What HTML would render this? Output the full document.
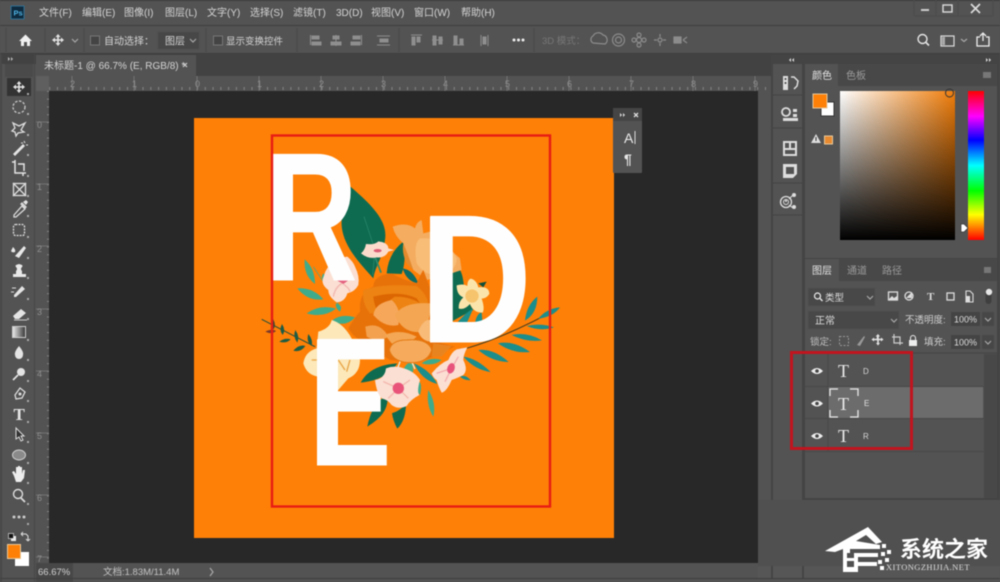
<!DOCTYPE html>
<html><head><meta charset="utf-8">
<style>
html,body{margin:0;padding:0;background:#535353;width:1000px;height:582px;overflow:hidden}
svg{display:block;position:absolute;left:0;top:0;filter:blur(.5px)}
text{font-family:"Liberation Sans","Noto Sans CJK SC",sans-serif;fill:#d4d4d4;font-size:10px}
.r{fill:#8f8f8f;font-size:9px}
.i{fill:none;stroke:#dcdcdc;stroke-width:1.3}
.g{fill:none;stroke:#a8a8a8;stroke-width:1.2}
.w{fill:#e4e4e4}
</style></head><body>
<svg width="1000" height="582" viewBox="0 0 1000 582" xmlns="http://www.w3.org/2000/svg">
<defs>
<linearGradient id="h" x1="0" x2="1" y1="0" y2="0"><stop offset="0" stop-color="#fff"/><stop offset="1" stop-color="#f07d0a"/></linearGradient>
<linearGradient id="v" x1="0" x2="0" y1="0" y2="1"><stop offset="0" stop-color="#000" stop-opacity="0"/><stop offset="1" stop-color="#000"/></linearGradient>
<linearGradient id="hue" x1="0" x2="0" y1="0" y2="1"><stop offset="0" stop-color="#f00"/><stop offset=".17" stop-color="#f0f"/><stop offset=".33" stop-color="#00f"/><stop offset=".5" stop-color="#0ff"/><stop offset=".67" stop-color="#0f0"/><stop offset=".83" stop-color="#ff0"/><stop offset="1" stop-color="#f00"/></linearGradient>
<linearGradient id="gr" x1="0" x2="1" y1="0" y2="0"><stop offset="0" stop-color="#eee"/><stop offset="1" stop-color="#333"/></linearGradient>
<pattern id="tx" width="7.78" height="14" patternUnits="userSpaceOnUse" x="197" y="76"><rect x="0" y="11" width="1" height="3" fill="#858585"/></pattern>
<pattern id="ty" width="14" height="7.78" patternUnits="userSpaceOnUse" x="36" y="122"><rect x="11" y="0" width="3" height="1" fill="#858585"/></pattern>
</defs>

<rect width="1000" height="582" fill="#535353"/>
<!-- title bar & options -->
<rect x="0" y="0" width="1000" height="1" fill="#3a3a3a"/>
<rect x="0" y="25" width="1000" height="1" fill="#3f3f3f"/>
<rect x="0" y="53" width="1000" height="1" fill="#3e3e3e"/>
<rect x="0" y="54" width="1000" height="10" fill="#424242"/>
<rect x="36" y="54" width="735" height="22" fill="#424242"/>
<rect x="36" y="55" width="160" height="21" fill="#535353"/>
<rect x="11" y="6" width="13" height="13" fill="#0e2a3e" stroke="#2f6f93"/>
<text x="13.500" y="15.500" style="font-size:7.500px;font-weight:bold;fill:#4fb3e4">Ps</text>
<text x="39" y="16">文件(F)</text><text x="82" y="16">编辑(E)</text><text x="124" y="16">图像(I)</text><text x="165" y="16">图层(L)</text><text x="207" y="16">文字(Y)</text><text x="250" y="16">选择(S)</text><text x="293" y="16">滤镜(T)</text><text x="336" y="16">3D(D)</text><text x="371" y="16">视图(V)</text><text x="414" y="16">窗口(W)</text><text x="461" y="16">帮助(H)</text>
<!-- window controls -->
<rect x="921" y="9" width="8" height="2" fill="#ccc"/>
<rect x="943" y="5" width="9" height="7" fill="none" stroke="#ddd" stroke-width="1.400"/>
<path d="M971 4l9 9M980 4l-9 9" stroke="#ddd" stroke-width="1.700"/>
<path d="M914 0v16M936 0v16M958 0v16M993 0v16M914 16h79" stroke="#4b4b4b"/>
<!-- options bar -->
<path d="M6 28v24M45 28v24M84 28v24M206 28v24M297 28v24M399 28v24M534 28v24" stroke="#474747"/>
<path d="M19 41l6.500-6.500 6.500 6.500h-2v5h-3v-4h-3v4h-3v-5z" fill="#f0f0f0"/>
<g class="w"><path d="M58 34l2.500 3h-1.700v2.200H61V37.500l3 2.500-3 2.500v-1.700h-2.200V43H60.500L58 46l-2.500-3h1.700v-2.200H55v1.700l-3-2.500 3-2.500v1.700h2.200V37h-1.700z"/></g>
<path d="M72 39l3 3 3-3" class="g" stroke-width="1"/>
<rect x="90.500" y="36" width="9" height="9" fill="#444" stroke="#777"/>
<text x="104" y="44.500">自动选择：</text>
<rect x="158" y="32" width="41" height="17" fill="#474747" stroke="#4c4c4c"/>
<text x="165" y="44.500">图层</text>
<path d="M190 39l3 3 3-3" class="g" stroke-width="1"/>
<rect x="213.500" y="36" width="9" height="9" fill="#444" stroke="#777"/>
<text x="226" y="44.500" style="font-size:9.500px">显示变换控件</text>
<g stroke="#8f8f8f" fill="#8f8f8f" stroke-width="1">
<path d="M310.500 35v10" fill="none"/><rect x="312" y="36" width="7" height="3"/><rect x="312" y="42" width="9" height="3"/>
<path d="M336 35v11" fill="none"/><rect x="333" y="36" width="6" height="3"/><rect x="331" y="42" width="10" height="3"/>
<path d="M361.500 35v10" fill="none"/><rect x="353" y="36" width="7" height="3"/><rect x="351" y="42" width="9" height="3"/>
<path d="M377 36h13M377 45h13" fill="none"/><rect x="380" y="39" width="8" height="3"/>
<path d="M411 35h11" fill="none"/><rect x="412" y="37" width="3" height="8"/><rect x="417" y="37" width="3" height="5"/>
<path d="M432 40h11" fill="none"/><rect x="433" y="36" width="3" height="9"/><rect x="439" y="37" width="3" height="7"/>
<path d="M453 45h11" fill="none"/><rect x="454" y="36" width="3" height="8"/><rect x="460" y="39" width="3" height="5"/>
<path d="M481 35v11M488 35v11" fill="none"/><rect x="483" y="37" width="3" height="7"/>
</g>
<g fill="#eee"><circle cx="514" cy="40" r="1.500"/><circle cx="518.500" cy="40" r="1.500"/><circle cx="523" cy="40" r="1.500"/></g>
<text x="542" y="44" style="font-size:9.500px;fill:#777">3D 模式：</text>
<g class="g" style="stroke:#8c8c8c">
<path d="M593 43a4 4 0 0 1 0-7 6 6 0 0 1 10-1 5 5 0 0 1 2 9z"/>
<circle cx="618.500" cy="40" r="6"/><circle cx="618.500" cy="40" r="3"/>
<circle cx="639" cy="40" r="2.500"/><circle cx="639" cy="35" r="2"/><circle cx="639" cy="45" r="2"/><circle cx="634" cy="40" r="2"/><circle cx="644" cy="40" r="2"/>
<circle cx="660" cy="40" r="2"/><path d="M660 34v3M660 43v3M654 40h3M663 40h3"/>
<rect x="674" y="37" width="7" height="6" fill="#8c8c8c"/><path d="M683 40l4-3M683 40l4 3"/>
</g>
<circle cx="922.500" cy="39" r="4.500" fill="none" stroke="#e6e6e6" stroke-width="1.400"/><path d="M926 42.500l3 3" stroke="#e6e6e6" stroke-width="1.600"/>
<rect x="941" y="36" width="13" height="10" fill="none" stroke="#ddd" stroke-width="1.200"/><rect x="942" y="37" width="3" height="8" fill="#aaa"/>
<path d="M961 39l3 2.500 3-2.500" class="g"/>
<path d="M980 37h-3v9h12v-9h-3M983 41v-7M980 36l3-3 3 3" fill="none" stroke="#eee" stroke-width="1.300"/>

<!-- tab -->
<text x="44" y="69" style="font-size:10px;fill:#d4d4d4">未标题-1 @ 66.7% (E, RGB/8) *</text>
<path d="M183 63l4 4M187 63l-4 4" stroke="#ccc" stroke-width="1.200"/>
<path d="M8 57l2 2-2 2zM11 57l2 2-2 2z" fill="#bbb"/>

<!-- rulers & workspace -->
<rect x="36" y="76" width="733" height="15" fill="#535353"/>
<rect x="36" y="76" width="13" height="15" fill="#5f5f5f"/>
<rect x="49" y="76" width="720" height="15" fill="url(#tx)"/>
<rect x="36" y="91" width="13" height="472" fill="#535353"/>
<rect x="36" y="91" width="13" height="472" fill="url(#ty)"/>
<path d="M72 76v15M134 76v15M197 76v15M259 76v15M321 76v15M383 76v15M445 76v15M507 76v15M569 76v15M631 76v15M693 76v15M755 76v15" stroke="#7d7d7d" stroke-width=".8"/>
<path d="M36 122h13M36 184h13M36 246h13M36 309h13M36 371h13M36 433h13M36 495h13M36 557h13" stroke="#7d7d7d" stroke-width=".8"/>
<text class="r" x="70" y="87">2</text><text class="r" x="132" y="87">1</text><text class="r" x="195" y="87">0</text><text class="r" x="257" y="87">1</text><text class="r" x="319" y="87">2</text><text class="r" x="381" y="87">3</text><text class="r" x="443" y="87">4</text><text class="r" x="505" y="87">5</text><text class="r" x="567" y="87">6</text><text class="r" x="629" y="87">7</text><text class="r" x="691" y="87">8</text><text class="r" x="753" y="87">9</text>
<text class="r" x="37" y="128">0</text><text class="r" x="37" y="190">1</text><text class="r" x="37" y="252">2</text><text class="r" x="37" y="315">3</text><text class="r" x="37" y="377">4</text><text class="r" x="37" y="439">5</text><text class="r" x="37" y="501">6</text><text class="r" x="37" y="562">7</text>
<rect x="49" y="91" width="709" height="472" fill="#282828"/>

<!-- document -->
<rect x="194" y="118" width="420" height="420" fill="#fe8007"/>

<!-- artwork (coords = zoom crop) -->
<g transform="translate(260 200) scale(.3333)">
<path d="M262 -48C330 10 385 60 375 120 370 170 345 200 340 235 300 190 240 130 245 60 245 20 255 -20 262 -48z" fill="#0f6b50"/>
<path d="M312 50L345 150 338 225" stroke="#2a8a6c" stroke-width="2" fill="none"/>
<path d="M345 170l18 48" stroke="#2f8c6c" stroke-width="5"/>
<g fill="#3fab8b">
<path d="M134 178Q165 205 165 252Q130 225 134 178z"/>
<path d="M112 265Q160 262 190 298Q145 305 112 265z"/>
<path d="M140 340Q180 312 228 326Q190 355 140 340z"/>
<path d="M190 220Q205 235 195 245Q180 235 190 220z"/>
<path d="M228 310Q250 315 240 335Q225 325 228 310z"/>
<path d="M215 362Q245 340 285 352Q255 385 215 362z"/>
</g>
<path d="M160 200L240 320" stroke="#3fab8b" stroke-width="2" fill="none"/>
<path d="M5 358L165 440" stroke="#1f4f3a" stroke-width="3" fill="none"/>
<g fill="#1c5c45">
<path d="M38 355Q50 375 40 388Q28 370 38 355z" fill="#3e4a2e"/>
<path d="M16 395Q35 385 48 393Q35 405 16 395z" fill="#7a3a2a"/>
<path d="M66 372Q78 390 68 405Q56 390 66 372z"/>
<path d="M58 425Q75 412 92 418Q78 432 58 425z"/>
<path d="M106 390Q120 410 112 428Q98 410 106 390z"/>
<path d="M100 452Q118 432 136 438Q122 458 100 452z"/>
<path d="M145 402Q160 420 155 438Q138 425 145 402z"/>
</g>
<path d="M620 445Q740 410 895 325" stroke="#3d3a20" stroke-width="3" fill="none"/>
<g fill="#1b8d8a">
<path d="M795 362Q800 315 832 290Q832 340 795 362z"/>
<path d="M835 356Q860 325 900 322Q880 350 835 356z"/>
<path d="M800 378Q840 368 882 382Q840 395 800 378z"/>
<path d="M755 405Q800 395 846 421Q800 428 755 405z"/>
<path d="M714 430Q760 420 810 456Q760 462 714 430z"/>
<path d="M655 450Q700 445 746 486Q695 485 655 450z"/>
<path d="M610 470Q650 475 692 516Q645 510 610 470z"/>
<path d="M600 530Q615 522 632 540Q612 542 600 530z"/>
</g>
<g fill="#0f6b50">
<path d="M302 548Q330 495 412 490Q380 540 302 548z"/>
<path d="M322 680Q335 610 382 585Q390 640 322 680z"/>
<path d="M396 640Q425 630 438 610Q438 660 412 686Q400 665 396 640z"/>
<path d="M380 220Q385 160 430 125Q440 180 425 222z"/>
</g>
<g fill="#1b8d8a">
<path d="M428 205Q460 210 475 250Q440 245 428 205z" fill="#0f6b63"/>
<path d="M462 490Q510 510 532 552Q485 540 462 490z"/>
</g>
<g fill="#3fab8b">
<path d="M505 570Q530 610 520 650Q498 615 505 570z"/>
<path d="M485 490Q510 470 545 480Q520 500 485 490z"/>
<path d="M432 505Q445 480 458 495L460 515Q445 522 432 515z"/>
<path d="M470 540Q490 545 480 585Q465 570 470 540z"/>
</g>
<path d="M422 480l-8 22M455 485l10 22" stroke="#e8f0e4" stroke-width="4"/>
<path d="M570 210Q605 180 612 260Q625 310 640 330 600 350 575 365z" fill="#0f6b50"/>
<path d="M590 370Q620 335 640 325L620 370z" fill="#1b8d8a"/>
<path d="M645 370Q650 340 665 338L668 372z" fill="#1b8d8a"/>
<path d="M655 250L680 245 670 262z" fill="#0f4f3a"/>
<!-- tulip -->
<path d="M398 80Q440 65 465 85Q470 65 485 60L490 100 510 95 600 175 605 210 560 225 500 240 460 210Q440 170 430 130Q405 110 398 80z" fill="#f4ac60"/>
<path d="M480 115Q460 130 470 190Q495 230 540 225Q590 215 590 175Q560 110 480 115z" fill="#f8bd77"/>
<path d="M430 130Q445 165 460 210L440 190Q425 160 430 130z" fill="#e38a2d"/>
<!-- centre flower -->
<path d="M265 385Q285 350 300 335Q295 275 340 260Q340 225 395 220Q430 240 470 250Q480 225 490 210L520 290 510 420 585 440 520 470Q480 490 440 485L390 480Q340 450 320 425Q285 420 265 385z" fill="#e8720a"/>
<path d="M310 270Q365 250 470 258Q510 290 505 330L330 340Q305 310 310 270z" fill="#ed8312"/>
<path d="M340 290Q345 340 375 350Q370 310 405 290Q450 290 480 310L470 295Q420 270 340 290z" fill="#dc6602"/>
<path d="M340 345Q345 310 395 300Q425 325 415 375Q375 385 340 345z" fill="#f6a75a"/>
<path d="M405 345Q430 305 510 310Q515 355 490 395Q430 405 405 345z" fill="#f4a652"/>
<path d="M316 380Q360 365 385 410Q355 430 320 410z" fill="#f3a14f"/>
<path d="M375 405Q420 385 470 410Q440 440 395 430z" fill="#f4a754"/>
<path d="M475 395Q490 355 515 360L515 425Q485 425 475 395z" fill="#f8bb78"/>
<path d="M388 450Q395 420 440 420Q505 415 515 450Q505 485 460 488Q400 490 388 450z" fill="#f6ab5c" stroke="#e37a15" stroke-width="3"/>
<path d="M520 430L575 438 545 470 515 470z" fill="#e88420"/>
<!-- cream flower D -->
<path d="M632 236Q650 240 655 262Q688 258 688 282Q680 295 665 296Q675 325 668 338Q640 338 630 312Q612 332 596 325Q595 305 610 292Q590 285 590 256Q610 250 622 258Q622 240 632 236z" fill="#fbe4ab"/>
<circle cx="636" cy="288" r="20" fill="#f7c46e"/>
<!-- cream flower left -->
<path d="M130 490Q135 455 170 445L175 395Q210 385 215 360Q250 370 275 415L300 480Q300 520 265 535L235 570Q200 560 175 530Q140 525 130 490z" fill="#fce8b9"/>
<path d="M235 480l20 30M270 480l-10 35M155 480h15" stroke="#e9a647" stroke-width="4"/>
<!-- pink flower under R -->
<path d="M196 215Q215 175 262 170Q280 185 285 200Q300 230 295 255Q285 275 262 280Q255 305 230 307Q205 290 205 270Q185 255 188 238z" fill="#fbdfd2"/>
<path d="M232 242h32l-14 10z" fill="#e3607f"/>
<path d="M246 250Q225 262 220 290M250 252Q268 265 270 275" stroke="#f2b7b0" stroke-width="4" fill="none"/>
</g>

<!-- letters -->
<text transform="translate(263 280.500) scale(.714 1)" style="font-size:184px;font-weight:bold;fill:#fefefe">R</text>
<rect x="272" y="154" width="21" height="126.500" fill="#fefefe"/>
<text transform="translate(420 342.500) scale(.844 1)" style="font-size:184px;font-weight:bold;fill:#fefefe">D</text>
<rect x="430" y="216.500" width="22" height="126" fill="#fefefe"/>
<text transform="translate(309.700 465.500) scale(.667 1)" style="font-size:184px;font-weight:bold;fill:#fefefe">E</text>
<rect x="317" y="339.500" width="21" height="126" fill="#fefefe"/>

<g transform="translate(260 200) scale(.3333)">
<path d="M303 160Q315 150 318 132Q345 135 355 124Q385 128 385 145L402 150 385 155Q375 175 350 172Q325 178 303 160z" fill="#fbdccc"/>
<ellipse cx="353" cy="152" rx="12" ry="5" fill="#dd5c74"/>
<path d="M345 540Q375 535 378 505Q405 495 432 505Q465 515 480 540Q470 575 478 585Q450 600 440 618Q415 630 395 615Q385 600 365 595Q350 580 345 540z" fill="#fbdfd2"/>
<path d="M415 565L370 545M415 565L450 540M415 565L445 595M415 565L385 595" stroke="#f3b6ad" stroke-width="4"/>
<circle cx="415" cy="565" r="17" fill="#e9537a"/>
<path d="M515 520Q540 490 565 480Q575 455 590 448Q605 445 622 442Q610 465 610 480Q625 510 610 525Q590 535 575 540Q560 575 545 578Q535 560 530 540Q520 535 515 520z" fill="#fbdfd2"/>
<path d="M575 505L530 520M575 505L555 545M575 505L595 470" stroke="#f3aeb0" stroke-width="4"/>
<ellipse cx="573" cy="505" rx="11" ry="16" transform="rotate(20 573 505)" fill="#e8537c"/>
</g>

<!-- red guide rect -->
<rect x="272" y="135.500" width="278" height="371" fill="none" stroke="#e81c14" stroke-width="2.400"/>

<!-- floating panel -->
<rect x="613" y="108" width="29" height="65" rx="1" fill="#535353"/>
<rect x="613" y="108" width="29" height="13" fill="#454545"/>
<path d="M620 113l2 2-2 2zM623 113l2 2-2 2z" fill="#ddd"/>
<path d="M634 113l4 4M638 113l-4 4" stroke="#ddd" stroke-width="1.300"/>
<text x="624" y="143" style="font-size:14px;fill:#eee">A</text>
<rect x="634.500" y="131" width="1" height="13" fill="#ddd"/>
<text x="624" y="164" style="font-size:14px;font-weight:bold;fill:#e6e6e6">¶</text>

<!-- toolbar -->
<rect x="0" y="54" width="2" height="528" fill="#484848"/>
<rect x="5" y="64" width="28" height="499" fill="#535353"/>
<rect x="5" y="64" width="28" height="13" fill="#4a4a4a"/>
<rect x="7" y="78" width="24" height="18" fill="#333"/>
<path d="M34.500 54v528" stroke="#474747"/>
<g fill="#aaa"><rect x="27" y="93" width="2" height="2"/><rect x="27" y="113" width="2" height="2"/><rect x="27" y="134" width="2" height="2"/><rect x="27" y="154" width="2" height="2"/><rect x="27" y="175" width="2" height="2"/><rect x="27" y="195" width="2" height="2"/><rect x="27" y="215" width="2" height="2"/><rect x="27" y="236" width="2" height="2"/><rect x="27" y="257" width="2" height="2"/><rect x="27" y="277" width="2" height="2"/><rect x="27" y="298" width="2" height="2"/><rect x="27" y="318" width="2" height="2"/><rect x="27" y="339" width="2" height="2"/><rect x="27" y="359" width="2" height="2"/><rect x="27" y="380" width="2" height="2"/><rect x="27" y="400" width="2" height="2"/><rect x="27" y="421" width="2" height="2"/><rect x="27" y="441" width="2" height="2"/><rect x="27" y="462" width="2" height="2"/><rect x="27" y="482" width="2" height="2"/><rect x="27" y="503" width="2" height="2"/><rect x="27" y="523" width="2" height="2"/></g>
<g class="w">
<path d="M19 81l2.500 3h-1.700v2.200H22V84.500l3 2.500-3 2.500v-1.700h-2.200V90H21.500L19 93l-2.500-3h1.700v-2.200H16v1.700l-3-2.500 3-2.500v1.700h2.200V84h-1.700z"/>
</g>
<circle cx="19" cy="107" r="6" fill="none" stroke="#c8c8c8" stroke-width="1.300" stroke-dasharray="2.500 1.500"/>
<path d="M13 123l6 3 6-3-4 7 3 2-6 1-2 3-1-4-3-1 3-3z" class="i"/>
<path d="M13 154l10-10 2 2-10 10z" fill="#e4e4e4"/><path d="M24 141l1 2M21 143l2 0M26 145l2 0" stroke="#ddd"/>
<path d="M12 162h3v11h11M15 160v3M23 173v3M18 164h6v7" fill="none" stroke="#e4e4e4" stroke-width="1.500"/>
<rect x="13.500" y="183.500" width="12" height="12" class="i"/><path d="M13 183l13 13M26 183l-13 13" class="i"/>
<path d="M14 215l8-9 3 3-9 8h-2zM21 204l1-1 4 4-1 1z" class="i"/><path d="M23 202l3 3 2-3-2-2z" fill="#e4e4e4"/>
<rect x="13.500" y="224.500" width="11" height="11" rx="2" class="i" stroke-dasharray="2 1"/>
<path d="M15 256l9-10 2 2-7 10z" fill="#e8e8e8"/><path d="M13 247q3 3 2 5-3 1-4-1z" fill="#e8e8e8"/>
<path d="M16 274h6v-3q-2-2 0-4 2-2-3-3-5 1-3 3 2 2 0 4zM13 274h13v3H13z" fill="#e8e8e8"/>
<path d="M14 295l8-9 3 3-9 8h-2z" fill="#e4e4e4"/><path d="M12 288h4M11 292h3" stroke="#ddd"/>
<path d="M13 316l8-7 5 4-7 6h-4z" fill="#e4e4e4"/><path d="M14 320h13" stroke="#ccc"/>
<rect x="12.500" y="326.500" width="13" height="11" fill="url(#gr)" stroke="#ccc"/>
<path d="M19 346q5 6 4 9a4 4 0 0 1-8 0q-1-3 4-9z" fill="#e4e4e4"/>
<circle cx="21" cy="372" r="4" fill="#e4e4e4"/><path d="M18 375l-5 5" stroke="#e4e4e4" stroke-width="1.700"/>
<path d="M15 395l5-7 5 4-3 6-6 1z" class="i"/><circle cx="20" cy="394" r="1.500" fill="#ddd"/>
<text x="13.500" y="420" style="font-family:'Liberation Serif',serif;font-size:17px;font-weight:bold;fill:#e6e6e6">T</text>
<path d="M16 428v11l3-2 2 4 2-1-2-4h3z" fill="#333" stroke="#ddd"/>
<ellipse cx="19" cy="455" rx="6.500" ry="5" fill="#8a8a8a" stroke="#d0d0d0"/>
<path d="M14 476l-2-4 2-1 2 3v-7h2v6-7h2v7-6h2v7l1-4h2l-1 8-3 4h-5z" fill="#eee"/>
<circle cx="18" cy="494" r="4.500" fill="none" stroke="#ddd" stroke-width="1.400"/><path d="M21 498l4 4" stroke="#ddd" stroke-width="1.800"/>
<g fill="#ccc"><circle cx="14" cy="517" r="1.500"/><circle cx="19" cy="517" r="1.500"/><circle cx="24" cy="517" r="1.500"/></g>
<rect x="11" y="536" width="5" height="5" fill="#eee"/><rect x="8.500" y="533.500" width="5" height="5" fill="#111" stroke="#ddd" stroke-width=".7"/>
<path d="M21 534h5l2 2v4M21 534l2-2M21 534l2 2M28 541l-2-2M28 541l2-2" fill="none" stroke="#ddd"/>
<rect x="15" y="552" width="14" height="14" fill="#fff"/>
<rect x="7.500" y="544.500" width="13" height="14" fill="#fe8007" stroke="#e8c89a"/>

<!-- status bar -->
<rect x="36" y="563" width="737" height="19" fill="#535353"/>
<rect x="36" y="563" width="37" height="19" fill="#474747"/>
<rect x="0" y="578" width="1000" height="1" fill="#3f3f3f"/>
<text x="38" y="575" style="font-size:9.500px;fill:#d2d2d2">66.67%</text>
<text x="103" y="575" style="font-size:9.500px;fill:#c2c2c2">文档:1.83M/11.4M</text>
<path d="M210 568l3 4-3 4" class="g"/>

<!-- right docks -->
<rect x="758" y="91" width="13" height="472" fill="#535353"/>
<rect x="771" y="54" width="229" height="446" fill="#444444"/>
<rect x="758" y="500" width="242" height="66" fill="#505050"/>
<rect x="758" y="566" width="242" height="12" fill="#565656"/>
<path d="M772 566v12M803 566v12" stroke="#414141" stroke-width="1.500"/>
<rect x="773" y="64" width="29" height="436" fill="#535353"/>
<rect x="805" y="64" width="192" height="194" fill="#535353"/>
<rect x="805" y="260" width="192" height="238" fill="#535353"/>
<rect x="0" y="578" width="1000" height="1" fill="#3f3f3f"/>
<path d="M791 58l-2 2 2 2zM794 58l-2 2 2 2zM986 58l2 2-2 2zM989 58l2 2-2 2z" fill="#ddd"/>
<!-- dock icons -->
<path d="M773 95h29M773 128h29M773 183h29M773 215h29" stroke="#434343"/>
<g fill="#ddd">
<rect x="783" y="76" width="5" height="14" /><circle cx="785.500" cy="79" r="1" fill="#444"/><circle cx="785.500" cy="83" r="1" fill="#444"/>
<path d="M791 77h3l4 4-1 5-3 3" fill="none" stroke="#ddd" stroke-width="1.500"/>
<circle cx="786" cy="112" r="4" fill="none" stroke="#ddd" stroke-width="1.800"/><rect x="793" y="109" width="4" height="3"/><rect x="793" y="114" width="4" height="3"/><rect x="783" y="118" width="15" height="3"/>
<path d="M783 141h14v15h-14zM785 143v5h4v-5zM791 143v5h4v-5zM785 150v4h10v-4z" fill-rule="evenodd"/>
<path d="M783 164h14v10l-4 4h-10zM786 167v7h8v-7z" fill-rule="evenodd"/>
</g>
<circle cx="786" cy="202" r="5.500" fill="none" stroke="#ddd" stroke-width="1.300"/><circle cx="786" cy="202" r="2.500" fill="none" stroke="#ddd"/>
<g fill="#ddd"><circle cx="794" cy="195" r="2"/><circle cx="794" cy="207" r="2"/><circle cx="786" cy="201" r="1"/></g>
<path d="M789 199l4-4M789 205l4 3" stroke="#ddd"/>

<!-- color panel -->
<rect x="805" y="64" width="192" height="22" fill="#484848"/>
<rect x="805" y="64" width="33" height="22" fill="#535353"/>
<text x="812" y="79" style="font-size:10px;fill:#e2e2e2">颜色</text>
<text x="846" y="79" style="font-size:10px;fill:#9a9a9a">色板</text>
<rect x="983" y="72" width="8" height="6" fill="#777"/>
<rect x="821" y="102" width="13" height="14" fill="#fff" stroke="#333"/>
<rect x="813" y="94" width="14" height="14" fill="#fe8007" stroke="#e8c89a"/>
<path d="M811 143l5-9 5 9z" fill="#ddd"/><rect x="815.500" y="137" width="1" height="4" fill="#333"/>
<rect x="824.500" y="136" width="8" height="8" fill="#e78a30" stroke="#e8c89a"/>
<rect x="840" y="91" width="115" height="149" fill="url(#h)"/>
<rect x="840" y="91" width="115" height="149" fill="url(#v)"/>
<circle cx="949.500" cy="93" r="4" fill="none" stroke="#333"/>
<rect x="968" y="91" width="16" height="149" fill="url(#hue)"/>
<path d="M961 224h3l4 4-4 4h-3z" fill="#fff" stroke="#333" stroke-width=".7"/>

<!-- layers panel -->
<rect x="805" y="259" width="192" height="22" fill="#484848"/>
<rect x="805" y="259" width="34" height="22" fill="#535353"/>
<text x="812" y="274" style="font-size:10px;fill:#e2e2e2">图层</text>
<text x="847" y="274" style="font-size:10px;fill:#9a9a9a">通道</text>
<text x="882" y="274" style="font-size:10px;fill:#9a9a9a">路径</text>
<rect x="984" y="267" width="7" height="6" fill="#777"/>
<rect x="808" y="288" width="67" height="18" fill="#484848" stroke="#4f4f4f"/>
<circle cx="817.500" cy="296" r="3" fill="none" stroke="#eee" stroke-width="1.200"/><path d="M820 298.500l2.500 2.500" stroke="#eee" stroke-width="1.300"/>
<text x="825" y="301" style="font-size:9.500px;fill:#ddd">类型</text>
<path d="M867 296l3 3 3-3" class="g"/>
<g class="i">
<rect x="888.500" y="292" width="9" height="8"/><circle cx="909" cy="296" r="4"/>
<rect x="947" y="293" width="7" height="7"/>
</g>
<path d="M906 298l6-6v6z" fill="#ddd"/>
<path d="M889 299l3-3 2 2 3-2v4h-8z" fill="#ddd"/>
<text x="927" y="300" style="font-family:'Liberation Serif',serif;font-size:11px;font-weight:bold;fill:#ddd">T</text>
<path d="M966 291h4l3 3v8h-7z" fill="none" stroke="#ddd" stroke-width="1.100"/><rect x="966" y="296" width="4" height="6" fill="#ddd"/>
<rect x="985.500" y="289" width="6" height="15" rx="3" fill="#3f3f3f"/><circle cx="989" cy="292" r="3.200" fill="#e6e6e6"/>
<rect x="808" y="311" width="91" height="18" fill="#484848" stroke="#4f4f4f"/>
<text x="815" y="324" style="font-size:10px;fill:#ddd">正常</text>
<path d="M891 319l3 3 3-3" class="g"/>
<text x="905" y="323" style="font-size:9.500px;fill:#cfcfcf">不透明度:</text>
<rect x="951" y="312" width="29" height="14" fill="#444"/>
<text x="954" y="322.500" style="font-size:9px;fill:#ddd">100%</text>
<rect x="982" y="312" width="12" height="14" fill="#474747"/>
<path d="M985 318l3 3 3-3" class="g"/>
<text x="810" y="345" style="font-size:9.500px;fill:#bfbfbf">锁定:</text>
<rect x="839.500" y="336.500" width="9" height="9" fill="none" stroke="#999" stroke-dasharray="2 1.500"/>
<path d="M857 345l7-9 1 1-5 9z" fill="#999"/>
<path d="M878 334l2 2.500h-1.200v2.200H881V337.500l2.500 2-2.500 2v-1.200h-2.200V343h1.200l-2 2.500-2-2.500h1.200v-2.700H874v1.200l-2.500-2 2.500-2v1.200h2.800V336.500h-1.200z" fill="#e4e4e4"/>
<path d="M892 337h8v8M894 334v9h9" fill="none" stroke="#ccc" stroke-width="1.200"/>
<rect x="909" y="340" width="8" height="6" fill="#eee"/><path d="M910.500 340v-2a2.500 2.500 0 0 1 5 0v2" fill="none" stroke="#eee"/>
<text x="924" y="345" style="font-size:9.500px;fill:#cfcfcf">填充:</text>
<rect x="951" y="335" width="29" height="14" fill="#444"/>
<text x="954" y="345.500" style="font-size:9px;fill:#ddd">100%</text>
<rect x="982" y="335" width="12" height="14" fill="#474747"/>
<path d="M985 341l3 3 3-3" class="g"/>
<path d="M805 353h192" stroke="#434343"/>
<rect x="984" y="354" width="13" height="144" fill="#484848"/>
<rect x="805" y="354" width="179" height="32" fill="#535353"/>
<rect x="828" y="387" width="155" height="31" fill="#6c6c6c"/>
<path d="M805 386.500h179M805 418.500h179M805 451.500h179M828 354v97" stroke="#484848"/>
<path d="M811 371q6-6 12 0q-6 6-12 0z" fill="#eee"/><circle cx="817" cy="371" r="1.800" fill="#444"/>
<path d="M811 403.500q6-6 12 0q-6 6-12 0z" fill="#eee"/><circle cx="817" cy="403.500" r="1.800" fill="#444"/>
<path d="M811 436q6-6 12 0q-6 6-12 0z" fill="#eee"/><circle cx="817" cy="436" r="1.800" fill="#444"/>
<text x="838" y="377" style="font-family:'Liberation Serif',serif;font-size:18px;fill:#eaeaea">T</text>
<text x="838" y="410" style="font-family:'Liberation Serif',serif;font-size:18px;fill:#eaeaea">T</text>
<text x="838" y="442" style="font-family:'Liberation Serif',serif;font-size:18px;fill:#eaeaea">T</text>
<text x="863" y="374" style="font-size:8px;fill:#d6d6d6">D</text>
<text x="864" y="406" style="font-size:8px;fill:#e0e0e0">E</text>
<text x="863" y="439" style="font-size:8px;fill:#d6d6d6">R</text>
<path d="M830 396v-7h8M850 389h8v7M830 410v7h8M850 417h8v-7" fill="none" stroke="#e8e8e8" stroke-width="1.300"/>
<rect x="791.500" y="352.500" width="120" height="96" fill="none" stroke="#c2141e" stroke-width="3"/>

<!-- watermark -->
<path d="M825 551L868 527 882 542 876 544 866 535 856 541 880 545 880 549 850 549 850 553 878 553 878 557 858 557 858 562 877 562 877 566 858 566 858 572 843 572 843 549 835 552z" fill="#fff"/>
<rect x="847" y="553" width="7" height="5" fill="#505050"/><rect x="847" y="561" width="7" height="6" fill="#505050"/>
<g fill="#fff"><rect x="882" y="544" width="4" height="4"/><rect x="887" y="550" width="4" height="4"/><rect x="881" y="552" width="4" height="4"/><rect x="885" y="558" width="4" height="4"/><rect x="878" y="560" width="4" height="4"/><rect x="880" y="566" width="4" height="4"/></g>
<text x="900" y="557" style="font-size:22px;font-weight:bold;fill:#fff">系统之家</text>
<text x="886" y="570" style="font-family:'Liberation Serif',serif;font-size:8.500px;fill:#ddd;letter-spacing:.4px">XITONGZHIJIA.NET</text>
</svg>
</body></html>
